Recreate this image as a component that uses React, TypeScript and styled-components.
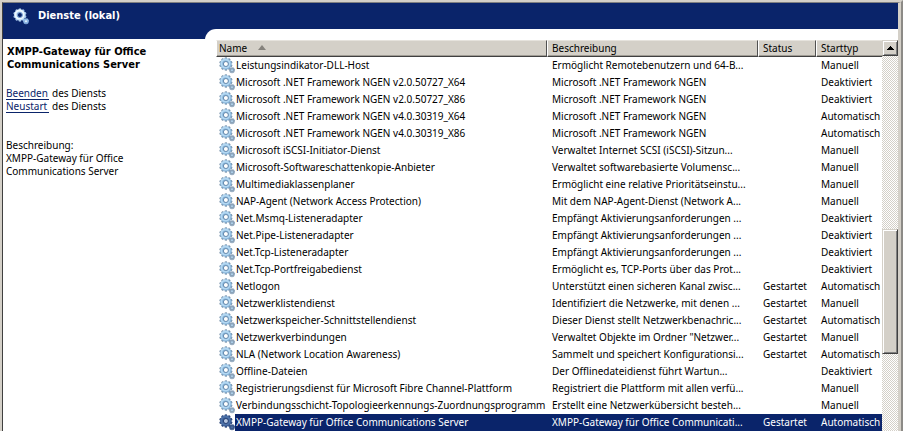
import React from "react";
import styled, { createGlobalStyle, css } from "styled-components";

const navy = "#0a246a";
const face = "#d4d0c8";

const GlobalStyle = createGlobalStyle`
  * { box-sizing: border-box; }
  body {
    margin: 0;
    background: #fff;
    color: #000;
    font: 10px/13px "Noto Sans", "Open Sans", sans-serif;
  }
`;

const Frame = styled.div`
  display: flex;
  flex-direction: column;
  min-height: 100vh;
  border-style: solid;
  border-color: ${face} #8c8a86 ${face} ${face};
  border-width: 2px 2px 0 2px;
`;

const Inset = styled.div`
  flex: 1;
  display: flex;
  flex-direction: column;
  border-style: solid;
  border-color: #808080 ${face} ${face} #404040;
  border-width: 1px 3px 0 1px;
`;

const Banner = styled.header`
  display: flex;
  align-items: center;
  height: 26px;
  padding-left: 10px;
  gap: 9px;
  background: ${navy};
  color: #fff;
`;

const BannerTitle = styled.h1`
  margin: 0;
  font: bold 11px/14px "DejaVu Sans Condensed", "DejaVu Sans", sans-serif;
`;

const Content = styled.div`
  flex: 1;
  display: flex;
  background: linear-gradient(${navy} 10px, #fff 10px);
`;

const Detail = styled.aside`
  flex: none;
  width: 202px;
  padding: 16px 3px 0;
`;

const ServiceName = styled.h2`
  width: 160px;
  margin: 0 0 16px 1px;
  font: bold 11px/13px "DejaVu Sans Condensed", "DejaVu Sans", sans-serif;
`;

const Actions = styled.div`
  margin-bottom: 26px;
`;

const Action = styled.div`
  height: 13px;
`;

const ActionLink = styled.a`
  display: inline-block;
  width: 43px;
  height: 13px;
  margin-right: 3px;
  border-bottom: 1px solid ${navy};
  color: ${navy};
  text-decoration: none;
`;

const Description = styled.p`
  width: 140px;
  margin: 0;
`;

const ListPanel = styled.main`
  flex: 1;
  min-width: 0;
  display: flex;
  padding: 11px 0 0 11px;
  background: #fff;
  border-top-left-radius: 11px;
`;

const ListView = styled.div`
  flex: 1;
  min-width: 0;
`;

const Table = styled.table`
  width: 100%;
  table-layout: fixed;
  border-collapse: separate;
  border-spacing: 0;
`;

const Heading = styled.th<{ $width?: number }>`
  width: ${(p) => (p.$width ? `${p.$width}px` : "auto")};
  height: 17px;
  padding: 0 0 0 4px;
  background: ${face};
  border-style: solid;
  border-color: #e6e3dd #505050 #404040 #fff;
  border-width: 1px;
  box-shadow: inset 0 -1px 0 #a09c94;
  text-align: left;
  font-weight: normal;
  white-space: nowrap;

  &:first-child {
    padding-left: 2px;
  }

  &:last-child {
    border-right: 0;
  }
`;

const SortArrow = styled.svg`
  margin: 0 0 2px 11px;
`;

const Cell = styled.td<{ $selected?: boolean }>`
  height: 17px;
  padding: 0 0 0 5px;
  overflow: hidden;
  white-space: nowrap;
  ${(p) =>
    p.$selected &&
    css`
      background: ${navy};
      color: #fff;
    `}
`;

const NameCell = styled(Cell)`
  padding-left: 3px;
  background: #fff;
`;

const NameLine = styled.div`
  display: flex;
  height: 17px;
`;

const NameText = styled.span<{ $selected?: boolean }>`
  flex: 1;
  padding: 2px 0 2px 1px;
  ${(p) =>
    p.$selected &&
    css`
      background: ${navy};
      color: #fff;
    `}
`;

const ScrollBar = styled.div`
  flex: none;
  display: flex;
  flex-direction: column;
  width: 16px;
  background: repeating-conic-gradient(#fff 0 25%, ${face} 0 50%) 0 0 / 2px 2px;
`;

const raised = css`
  background: ${face};
  border-style: solid;
  border-width: 1px;
  border-color: ${face} #404040 #404040 ${face};
  box-shadow: inset 1px 1px 0 #fff, inset -1px -1px 0 #808080;
`;

const ScrollButton = styled.button`
  ${raised}
  flex: none;
  display: flex;
  align-items: center;
  justify-content: center;
  height: 16px;
  padding: 0;
`;

const Track = styled.div<{ $share: number }>`
  flex: ${(p) => p.$share} 0 0;
`;

const Thumb = styled(Track)`
  ${raised}
`;

const Icon = styled.svg`
  flex: none;
`;

const teeth = [0, 36, 72, 108, 144, 180, 216, 252, 288, 324];

type Tone = "light" | "banner" | "dark";

const tones: Record<Tone, { edge: string; body: string; shine: string; hole: string; rim: string; small: string }> = {
  light: { edge: "#7891aa", body: "#86b4da", shine: "#b4d8f2", hole: "#fff", rim: "#6489ad", small: "#8ba3ba" },
  banner: { edge: "#9dbbe0", body: "#b9dbf6", shine: "#eef8ff", hole: navy, rim: "#7ea6d6", small: "#8fb9e6" },
  dark: { edge: "#243e74", body: "#3a5c94", shine: "#4d72a8", hole: "#b6c7e0", rim: "#243e74", small: "#3b5788" },
};

function GearIcon({ tone }: { tone: Tone }) {
  const t = tones[tone];
  return (
    <Icon width="16" height="17" viewBox="0 0 16 17" aria-hidden="true">
      {teeth.map((a) => (
        <rect key={a} x="5.8" y="0.4" width="2.2" height="3" fill={t.edge} transform={`rotate(${a} 6.9 7)`} />
      ))}
      <circle cx="6.9" cy="7" r="5.8" fill={t.body} />
      <circle cx="6.5" cy="6.6" r="4.1" fill="none" stroke={t.shine} strokeWidth="1.8" />
      <circle cx="6.9" cy="7" r="2.5" fill={t.hole} stroke={t.rim} strokeWidth="1" />
      {teeth.filter((_, i) => i % 2 === 0).map((a) => (
        <rect key={a} x="12.3" y="10.2" width="1.4" height="6" fill={t.small} transform={`rotate(${a} 13 13.2)`} />
      ))}
      <circle cx="13" cy="13.2" r="2.3" fill={t.small} />
      <circle cx="13" cy="13.2" r="0.9" fill={t.shine} />
    </Icon>
  );
}

const ngen = "Microsoft .NET Framework NGEN";

const services: [string, string, string, string][] = [
  ["Leistungsindikator-DLL-Host", "Ermöglicht Remotebenutzern und 64-B...", "", "Manuell"],
  ["Microsoft .NET Framework NGEN v2.0.50727_X64", ngen, "", "Deaktiviert"],
  ["Microsoft .NET Framework NGEN v2.0.50727_X86", ngen, "", "Deaktiviert"],
  ["Microsoft .NET Framework NGEN v4.0.30319_X64", ngen, "", "Automatisch"],
  ["Microsoft .NET Framework NGEN v4.0.30319_X86", ngen, "", "Automatisch"],
  ["Microsoft iSCSI-Initiator-Dienst", "Verwaltet Internet SCSI (iSCSI)-Sitzun...", "", "Manuell"],
  ["Microsoft-Softwareschattenkopie-Anbieter", "Verwaltet softwarebasierte Volumensc...", "", "Manuell"],
  ["Multimediaklassenplaner", "Ermöglicht eine relative Prioritätseinstu...", "", "Manuell"],
  ["NAP-Agent (Network Access Protection)", "Mit dem NAP-Agent-Dienst (Network A...", "", "Manuell"],
  ["Net.Msmq-Listeneradapter", "Empfängt Aktivierungsanforderungen ...", "", "Deaktiviert"],
  ["Net.Pipe-Listeneradapter", "Empfängt Aktivierungsanforderungen ...", "", "Deaktiviert"],
  ["Net.Tcp-Listeneradapter", "Empfängt Aktivierungsanforderungen ...", "", "Deaktiviert"],
  ["Net.Tcp-Portfreigabedienst", "Ermöglicht es, TCP-Ports über das Prot...", "", "Deaktiviert"],
  ["Netlogon", "Unterstützt einen sicheren Kanal zwisc...", "Gestartet", "Automatisch"],
  ["Netzwerklistendienst", "Identifiziert die Netzwerke, mit denen ...", "Gestartet", "Manuell"],
  ["Netzwerkspeicher-Schnittstellendienst", "Dieser Dienst stellt Netzwerkbenachric...", "Gestartet", "Automatisch"],
  ["Netzwerkverbindungen", "Verwaltet Objekte im Ordner \"Netzwer...", "Gestartet", "Manuell"],
  ["NLA (Network Location Awareness)", "Sammelt und speichert Konfigurationsi...", "Gestartet", "Automatisch"],
  ["Offline-Dateien", "Der Offlinedateidienst führt Wartun...", "", "Deaktiviert"],
  ["Registrierungsdienst für Microsoft Fibre Channel-Plattform", "Registriert die Plattform mit allen verfü...", "", "Manuell"],
  ["Verbindungsschicht-Topologieerkennungs-Zuordnungsprogramm", "Erstellt eine Netzwerkübersicht besteh...", "", "Manuell"],
  ["XMPP-Gateway für Office Communications Server", "XMPP-Gateway für Office Communicati...", "Gestartet", "Automatisch"],
];

const selectedIndex = services.length - 1;

export default function App() {
  return (
    <>
      <GlobalStyle />
      <Frame>
        <Inset>
          <Banner>
            <GearIcon tone="banner" />
            <BannerTitle>Dienste (lokal)</BannerTitle>
          </Banner>
          <Content>
            <Detail>
              <ServiceName>XMPP-Gateway für Office Communications Server</ServiceName>
              <Actions>
                <Action>
                  <ActionLink href="#beenden">Beenden</ActionLink>
                  des Diensts
                </Action>
                <Action>
                  <ActionLink href="#neustart">Neustart</ActionLink>
                  des Diensts
                </Action>
              </Actions>
              <Description>
                Beschreibung:
                <br />
                XMPP-Gateway für Office Communications Server
              </Description>
            </Detail>
            <ListPanel>
              <ListView>
                <Table>
                  <thead>
                    <tr>
                      <Heading aria-sort="ascending">
                        Name
                        <SortArrow width="8" height="5" viewBox="0 0 8 5" aria-hidden="true">
                          <path d="M4 0 8 5H0z" fill="#85827c" />
                        </SortArrow>
                      </Heading>
                      <Heading $width={211}>Beschreibung</Heading>
                      <Heading $width={58}>Status</Heading>
                      <Heading $width={66}>Starttyp</Heading>
                    </tr>
                  </thead>
                  <tbody>
                    {services.map(([name, text, status, start], i) => {
                      const selected = i === selectedIndex;
                      return (
                        <tr key={name} aria-selected={selected}>
                          <NameCell>
                            <NameLine>
                              <GearIcon tone={selected ? "dark" : "light"} />
                              <NameText $selected={selected}>{name}</NameText>
                            </NameLine>
                          </NameCell>
                          <Cell $selected={selected}>{text}</Cell>
                          <Cell $selected={selected}>{status}</Cell>
                          <Cell $selected={selected}>{start}</Cell>
                        </tr>
                      );
                    })}
                  </tbody>
                </Table>
              </ListView>
              <ScrollBar role="scrollbar" aria-orientation="vertical" aria-valuenow={69}>
                <ScrollButton aria-label="Nach oben">
                  <svg width="7" height="4" viewBox="0 0 7 4" aria-hidden="true">
                    <path d="M3 0h1v1h1v1h1v1h1v1H0V3h1V2h1V1h1z" fill="#000" />
                  </svg>
                </ScrollButton>
                <Track $share={174} />
                <Thumb $share={124} />
                <Track $share={77} />
              </ScrollBar>
            </ListPanel>
          </Content>
        </Inset>
      </Frame>
    </>
  );
}
